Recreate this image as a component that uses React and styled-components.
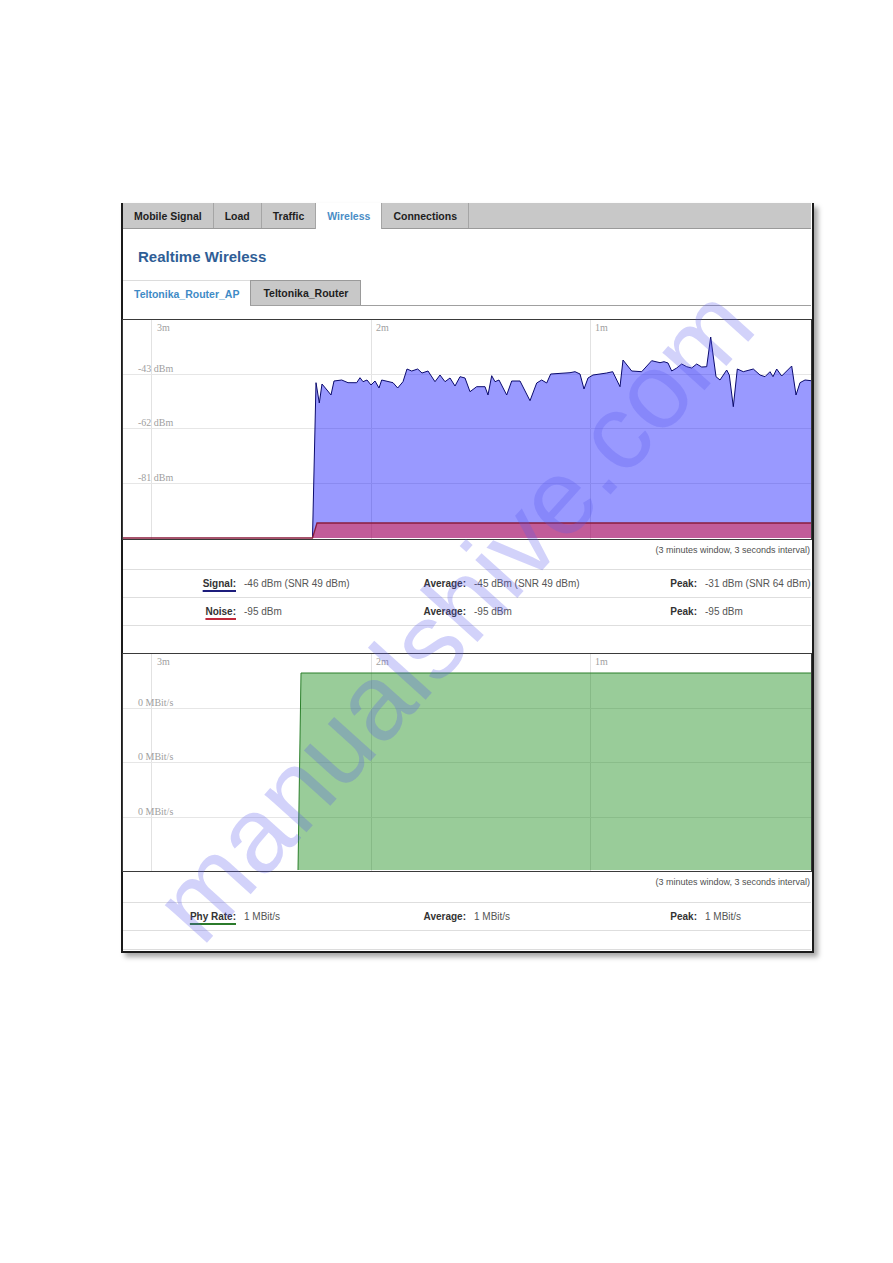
import React from "react";
import styled, { createGlobalStyle } from "styled-components";

const GlobalStyle = createGlobalStyle`
  body {
    margin: 0;
    background: #fff;
    font-family: "Liberation Sans", Arial, sans-serif;
  }
`;

const Page = styled.div`
  position: relative;
  width: 893px;
  min-height: 1263px;
  box-sizing: border-box;
  padding: 203px 0 0 121px;
  overflow: hidden;
`;

const Frame = styled.div`
  width: 693px;
  box-sizing: border-box;
  border: 2px solid #1b1b1b;
  border-top: none;
  padding-bottom: 1px;
  background: #fff;
  box-shadow: 4px 4px 5px rgba(0, 0, 0, 0.35);
`;

const TabBar = styled.div`
  display: flex;
  height: 25px;
  margin-right: 1px;
  background: #c8c8c8;
  border-bottom: 1px solid #9a9a9a;
`;

const Tab = styled.div`
  display: flex;
  align-items: center;
  padding: 0 11px;
  font-size: 10.5px;
  font-weight: bold;
  color: ${(p) => (p.$active ? "#4a8dc6" : "#1e1e1e")};
  background: ${(p) => (p.$active ? "#fff" : "transparent")};
  border-right: 1px solid #a5a5a5;
  ${(p) =>
    p.$active &&
    `
    height: 26px;
    margin-left: -1px;
    border-left: 1px solid #a5a5a5;
  `}
`;

const Heading = styled.h2`
  margin: 0;
  padding: 19px 0 14px 15px;
  font-size: 15px;
  line-height: 18px;
  font-weight: bold;
  color: #2f5e96;
`;

const SubTabBar = styled.div`
  display: flex;
  height: 25px;
  margin-right: 1px;
  border-bottom: 1px solid #a0a0a0;
`;

const SubTab = styled.div`
  display: flex;
  align-items: center;
  box-sizing: border-box;
  font-size: 10.5px;
  font-weight: bold;
  ${(p) =>
    p.$active
      ? `
    height: 26px;
    padding: 0 11px;
    color: #3f8bc6;
    background: #fff;
    border-top: 1px solid #dcdcdc;
  `
      : `
    height: 25px;
    padding: 0 12px;
    color: #1e1e1e;
    background: #c8c8c8;
    border: 1px solid #9a9a9a;
    border-bottom: none;
  `}
`;

const ChartBox = styled.div`
  margin: ${(p) => p.$top}px 0 0 -1px;
  border: 1px solid #3a3a3a;
  background: #fff;

  svg {
    display: block;
  }
`;

const Caption = styled.div`
  height: ${(p) => p.$h}px;
  box-sizing: border-box;
  padding: 5px 2px 0 0;
  text-align: right;
  font-size: 9px;
  line-height: 11px;
  color: #505050;
`;

const Legend = styled.div`
  margin-right: 1px;
  border-bottom: 1px solid #dedede;
`;

const LegendRow = styled.div`
  display: grid;
  grid-template-columns: 113px 170px 60px 169px 62px 1fr;
  align-items: center;
  height: 27px;
  border-top: 1px solid #dedede;
  font-size: 10px;
  line-height: 12px;
`;

const Key = styled.span`
  justify-self: end;
  font-weight: bold;
  color: #333;
  white-space: nowrap;
  ${(p) =>
    p.$line &&
    `
    text-decoration: underline;
    text-decoration-color: ${p.$line};
    text-decoration-thickness: 2px;
    text-underline-offset: 3px;
  `}
`;

const Value = styled.span`
  padding-left: 8px;
  color: #555;
  white-space: nowrap;
`;

const Spacer = styled.div`
  height: 18px;
  margin-right: 1px;
  border-bottom: 1px solid #dcdcdc;
`;

const Watermark = styled.div`
  position: absolute;
  left: 0;
  top: 0;
  width: 1000px;
  text-align: center;
  font-family: "Liberation Sans", Arial, sans-serif;
  font-size: 107px;
  line-height: 112px;
  color: rgba(90, 90, 235, 0.27);
  white-space: nowrap;
  pointer-events: none;
  transform: translate(-47px, 558px) rotate(-48deg);
`;

const AxisText = ({ x, y, children }) => (
  <text x={x} y={y} fontFamily='"Liberation Serif", "Times New Roman", serif' fontSize="10" fill="#a0a0a0">
    {children}
  </text>
);

const signal = [
  [312.5, 538], [316, 382.7], [319.3, 403], [322, 384], [327, 390], [331, 395], [334, 381],
  [341.7, 380], [348, 382.7], [356.7, 382.7], [360, 377.7], [363, 381.7], [367, 380], [371, 385],
  [375, 381], [379, 388], [381.7, 380], [393, 382.7], [397.7, 388], [403, 381.7], [407, 369],
  [411.7, 371], [417.7, 369], [422, 373], [428, 371], [435, 381.7], [440, 375], [445, 381.7],
  [450, 378], [455, 386], [460, 376.7], [465, 378], [470, 391.7], [476.7, 386.7], [485, 386.7],
  [488, 395], [491.7, 375.7], [495, 381.7], [499, 380], [506.7, 395], [511.7, 381], [520, 381],
  [530, 400.7], [536.7, 383], [541.7, 380], [546.7, 383], [550.7, 374], [570, 372.7], [575, 371.7],
  [580, 374], [584, 389], [588, 378], [593, 375], [600, 374], [606.7, 373], [612.7, 371.7],
  [620, 386.7], [623, 360], [631.7, 371], [641.7, 371.7], [651.7, 360.7], [660, 362.7], [664, 361.7],
  [668, 363], [671.7, 371], [676.7, 368], [681.7, 364], [686.7, 366.7], [691.7, 368], [696.7, 364],
  [701.7, 367], [706.7, 366.7], [710.7, 337], [716, 376.7], [720, 380], [726.7, 370], [729.3, 375],
  [733.3, 406.7], [737.3, 369], [743.3, 371.7], [753.3, 369], [760, 375], [765, 376.7], [770, 371.7],
  [773, 376.7], [776.7, 369], [781.7, 376], [791.7, 366], [796, 395], [800, 382.7], [805, 380],
  [811, 380.7],
];

const noise = [[122, 538], [312.5, 538], [317, 523], [811, 523]];
const phy = [[298, 870], [301, 673], [811, 673]];

const pts = (arr) => arr.map(([x, y]) => `${x},${y}`).join(" ");

// chart in page coordinates, via the viewBox
const Chart = ({ top, y0, height, hLines, labelY, children }) => (
  <ChartBox $top={top}>
    <svg width="688" height={height} viewBox={`123 ${y0} 688 ${height}`}>
      {[151, 371, 590].map((x) => (
        <line key={x} x1={x + 0.5} x2={x + 0.5} y1={y0} y2={y0 + height} stroke="#e2e2e2" />
      ))}
      {hLines.map((l) => (
        <line key={l.y} x1="123" x2="811" y1={l.y + 0.5} y2={l.y + 0.5} stroke="#e6e6e6" />
      ))}
      {children}
      <AxisText x={157} y={labelY}>3m</AxisText>
      <AxisText x={376} y={labelY}>2m</AxisText>
      <AxisText x={595} y={labelY}>1m</AxisText>
      {hLines.map((l) => (
        <AxisText key={l.y} x={138} y={l.y - 2}>{l.text}</AxisText>
      ))}
    </svg>
  </ChartBox>
);

const App = () => (
  <Page>
    <GlobalStyle />
    <Frame>
      <TabBar>
        <Tab>Mobile Signal</Tab>
        <Tab>Load</Tab>
        <Tab>Traffic</Tab>
        <Tab $active>Wireless</Tab>
        <Tab>Connections</Tab>
      </TabBar>

      <Heading>Realtime Wireless</Heading>

      <SubTabBar>
        <SubTab $active>Teltonika_Router_AP</SubTab>
        <SubTab>Teltonika_Router</SubTab>
      </SubTabBar>

      <Chart
        top={13}
        y0={320}
        height={219}
        labelY={331}
        hLines={[
          { y: 374, text: "-43 dBm" },
          { y: 428, text: "-62 dBm" },
          { y: 483, text: "-81 dBm" },
        ]}
      >
        <polygon points={pts([...signal, [811, 538]])} fill="blue" fillOpacity="0.4" />
        <polyline points={pts(signal)} fill="none" stroke="#0b0b6e" strokeWidth="1" />
        <polygon points={pts([...noise, [811, 538]])} fill="red" fillOpacity="0.4" />
        <polyline points={pts(noise)} fill="none" stroke="#8a1d3c" strokeWidth="1.3" />
      </Chart>
      <Caption $h={29}>(3 minutes window, 3 seconds interval)</Caption>

      <Legend>
        <LegendRow>
          <Key $line="#1c1c7c">Signal:</Key>
          <Value>-46 dBm (SNR 49 dBm)</Value>
          <Key>Average:</Key>
          <Value>-45 dBm (SNR 49 dBm)</Value>
          <Key>Peak:</Key>
          <Value>-31 dBm (SNR 64 dBm)</Value>
        </LegendRow>
        <LegendRow>
          <Key $line="#c0283a">Noise:</Key>
          <Value>-95 dBm</Value>
          <Key>Average:</Key>
          <Value>-95 dBm</Value>
          <Key>Peak:</Key>
          <Value>-95 dBm</Value>
        </LegendRow>
      </Legend>

      <Chart
        top={27}
        y0={654}
        height={217}
        labelY={665}
        hLines={[
          { y: 708, text: "0 MBit/s" },
          { y: 762, text: "0 MBit/s" },
          { y: 817, text: "0 MBit/s" },
        ]}
      >
        <polygon points={pts([...phy, [811, 870]])} fill="green" fillOpacity="0.4" />
        <polyline points={pts(phy)} fill="none" stroke="#2a7f2a" strokeWidth="1" />
      </Chart>
      <Caption $h={30}>(3 minutes window, 3 seconds interval)</Caption>

      <Legend>
        <LegendRow>
          <Key $line="#2b7a2b">Phy Rate:</Key>
          <Value>1 MBit/s</Value>
          <Key>Average:</Key>
          <Value>1 MBit/s</Value>
          <Key>Peak:</Key>
          <Value>1 MBit/s</Value>
        </LegendRow>
      </Legend>
      <Spacer />
    </Frame>
    <Watermark>manualshive.com</Watermark>
  </Page>
);

export default App;
